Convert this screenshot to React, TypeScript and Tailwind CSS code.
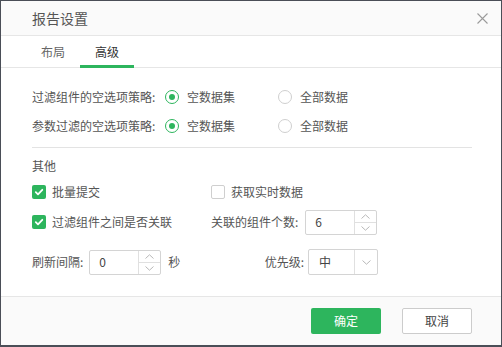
import { useState } from "react";

const font = { fontFamily: '"Noto Sans CJK SC", "Noto Sans", sans-serif' };

function Radio({ checked, label }: { checked: boolean; label: string }) {
	return (
		<div className="flex items-center gap-[8px]">
			<span
				className={`flex size-[14px] items-center justify-center rounded-full border ${
					checked ? "border-[#2db55d]" : "border-[#cfcfcf]"
				} bg-white`}
			>
				{checked && <span className="size-[6px] rounded-full bg-[#2db55d]" />}
			</span>
			<span className="text-[12px] text-[#555]">{label}</span>
		</div>
	);
}

function Checkbox({ checked, label }: { checked: boolean; label: string }) {
	return (
		<div className="flex items-center gap-[6px]">
			{checked ? (
				<span className="flex size-[14px] items-center justify-center rounded-[2px] bg-[#2db55d]">
					<svg className="size-[10px]" fill="none" viewBox="0 0 10 10">
						<path
							d="M1.8 5.2 L4 7.3 L8.3 2.8"
							stroke="white"
							strokeLinecap="round"
							strokeLinejoin="round"
							strokeWidth="1.8"
						/>
					</svg>
				</span>
			) : (
				<span className="size-[14px] rounded-[2px] border border-[#cfcfcf] bg-white" />
			)}
			<span className="text-[12px] text-[#555]">{label}</span>
		</div>
	);
}

function Chevron({ up }: { up?: boolean }) {
	return (
		<svg className="h-[5px] w-[9px]" fill="none" viewBox="0 0 9 5">
			<path
				d={up ? "M0.5 4.5 L4.5 0.8 L8.5 4.5" : "M0.5 0.5 L4.5 4.2 L8.5 0.5"}
				stroke="#b8b8b8"
				strokeWidth="1"
			/>
		</svg>
	);
}

function Spinner({ value }: { value: string }) {
	return (
		<div className="flex h-[25px] w-[72px] rounded-[2px] border border-[#d4d4d4] bg-white">
			<div className="flex flex-1 items-center pl-[9px] text-[12px] text-[#444]">
				{value}
			</div>
			<div className="flex w-[22px] flex-col border-[#e0e0e0] border-l">
				<div className="flex flex-1 items-center justify-center border-[#e0e0e0] border-b">
					<Chevron up />
				</div>
				<div className="flex flex-1 items-center justify-center">
					<Chevron />
				</div>
			</div>
		</div>
	);
}

export default function App() {
	const [tab] = useState("advanced");

	return (
		<div
			className="h-[347px] w-[502px] bg-[#4a4e57] pt-px pl-px"
			style={font}
		>
			<div className="flex h-[344px] w-[500px] flex-col bg-white">
				<div className="flex h-[35px] shrink-0 items-center justify-between border-[#e6e6e6] border-b bg-[#fafafa] pr-[13px] pl-[31px]">
					<span className="text-[14px] text-[#555]">报告设置</span>
					<svg className="size-[11px]" fill="none" viewBox="0 0 11 11">
						<path d="M0.5 0.5 L10.5 10.5 M10.5 0.5 L0.5 10.5" stroke="#9a9a9a" strokeWidth="1.1" />
					</svg>
				</div>

				<div className="flex h-[32px] shrink-0 border-[#e6e6e6] border-b pl-[25px]">
					<div className="flex w-[54px] items-center justify-center text-[12px] text-[#666]">
						布局
					</div>
					<div
						className={`-mb-px flex w-[54px] items-center justify-center border-b-[3px] pt-[2px] text-[12px] text-[#333] ${
							tab === "advanced" ? "border-[#2db55d]" : "border-transparent"
						}`}
					>
						高级
					</div>
				</div>

				<div className="flex flex-1 flex-col pt-[14px] pr-[29px] pl-[31px]">
					<div className="flex h-[29px] items-center">
						<span className="w-[133px] text-[12px] text-[#555]">
							过滤组件的空选项策略:
						</span>
						<div className="w-[113px]">
							<Radio checked label="空数据集" />
						</div>
						<Radio checked={false} label="全部数据" />
					</div>
					<div className="flex h-[29px] items-center">
						<span className="w-[133px] text-[12px] text-[#555]">
							参数过滤的空选项策略:
						</span>
						<div className="w-[113px]">
							<Radio checked label="空数据集" />
						</div>
						<Radio checked={false} label="全部数据" />
					</div>

					<div className="mt-[7px] border-[#e3e3e3] border-t" />

					<div className="mt-[8px] flex h-[20px] items-center text-[12px] text-[#555]">
						其他
					</div>

					<div className="mt-[3px] flex h-[26px] items-center">
						<div className="w-[179px]">
							<Checkbox checked label="批量提交" />
						</div>
						<Checkbox checked={false} label="获取实时数据" />
					</div>

					<div className="mt-[4px] flex h-[26px] items-center">
						<div className="w-[179px]">
							<Checkbox checked label="过滤组件之间是否关联" />
						</div>
						<div className="flex items-center gap-[7px]">
							<span className="text-[12px] text-[#555]">关联的组件个数:</span>
							<Spinner value="6" />
						</div>
					</div>

					<div className="mt-[14px] flex h-[26px] items-center">
						<div className="flex w-[179px] items-center">
							<span className="text-[12px] text-[#555]">刷新间隔:</span>
							<div className="ml-[6px]">
								<Spinner value="0" />
							</div>
							<span className="ml-[7px] text-[12px] text-[#555]">秒</span>
						</div>
						<div className="flex w-[167px] items-center justify-end gap-[4px]">
							<span className="text-[12px] text-[#555]">优先级:</span>
							<div className="flex h-[26px] w-[70px] rounded-[2px] border border-[#d4d4d4] bg-white">
								<div className="flex flex-1 items-center pl-[10px] text-[12px] text-[#444]">
									中
								</div>
								<div className="flex w-[23px] items-center justify-center border-[#e0e0e0] border-l">
									<Chevron />
								</div>
							</div>
						</div>
					</div>
				</div>

				<div className="flex h-[49px] shrink-0 items-center justify-end gap-[21px] border-[#e6e6e6] border-t bg-[#fafafa] pr-[29px]">
					<button
						className="h-[26px] w-[70px] rounded-[2px] bg-[#2db55d] text-[12px] text-white"
						type="button"
					>
						确定
					</button>
					<button
						className="h-[26px] w-[70px] rounded-[2px] border border-[#cccccc] bg-white text-[12px] text-[#444]"
						type="button"
					>
						取消
					</button>
				</div>
			</div>
		</div>
	);
}
